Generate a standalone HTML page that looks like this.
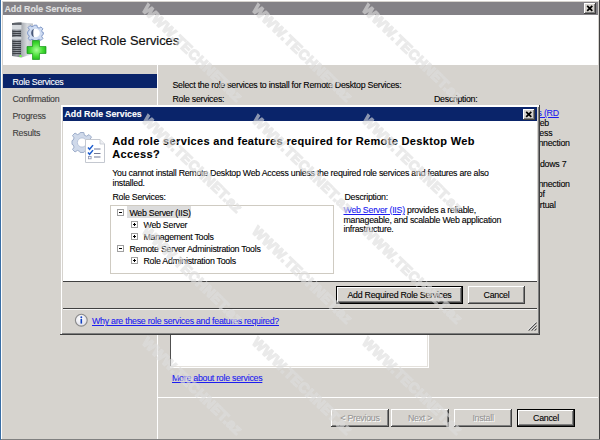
<!DOCTYPE html>
<html><head><meta charset="utf-8">
<style>
*{margin:0;padding:0;box-sizing:border-box}
html,body{width:600px;height:440px;overflow:hidden;background:#d6d3ce;font-family:"Liberation Sans",sans-serif;font-size:8.8px;letter-spacing:-0.25px;color:#000}
.a{position:absolute;white-space:nowrap;line-height:10px;-webkit-text-stroke:0.1px currentColor}
.lnk{color:#1c1cf0;text-decoration:underline}
.pm{position:absolute;width:7px;height:7px;border:1px solid #a0a0a0;background:#fff}
.pm:before{content:"";position:absolute;left:1px;top:2px;width:3px;height:1px;background:#000}
.pl:after{content:"";position:absolute;left:2px;top:1px;width:1px;height:3px;background:#000}
</style></head><body>
<div style="position:absolute;left:0px;top:0px;width:1px;height:440px;background:#3a6ea5;"></div>
<div style="position:absolute;left:1px;top:0px;width:599px;height:440px;background:#fff;"></div>
<div style="position:absolute;left:2px;top:1px;width:598px;height:439px;background:#d6d3ce;"></div>
<div style="position:absolute;left:599px;top:0px;width:1px;height:440px;background:#404040;"></div>
<div style="position:absolute;left:1px;top:439px;width:599px;height:1px;background:#808080;"></div>
<div style="position:absolute;left:3px;top:2px;width:595px;height:13px;background:#838186;"></div>
<div class="a" style="left:4.5px;top:4px;font-weight:bold;color:#e0e0e0;letter-spacing:0">Add Role Services</div>
<div style="position:absolute;left:584px;top:3px;width:12px;height:11px;background:#404040;"></div>
<div style="position:absolute;left:584px;top:3px;width:11px;height:10px;background:#fff;"></div>
<div style="position:absolute;left:585px;top:4px;width:10px;height:9px;background:#808080;"></div>
<div style="position:absolute;left:585px;top:4px;width:9px;height:8px;background:#d6d3ce;"></div>
<svg style="position:absolute;left:584px;top:3px" width="12" height="11"><path d="M3.2 2.8 L8.3 7.9 M8.3 2.8 L3.2 7.9" stroke="#000" stroke-width="1.7"/></svg>
<div style="position:absolute;left:3px;top:15px;width:595px;height:50px;background:#fff;"></div>
<div class="a" style="left:61px;top:34px;font-size:12.8px;line-height:14px;letter-spacing:0;color:#111;-webkit-text-stroke:0.2px #111">Select Role Services</div>
<div style="position:absolute;left:157px;top:65px;width:1px;height:374px;background:#fff;"></div>
<div style="position:absolute;left:3px;top:74px;width:154px;height:14px;background:#0a246a;"></div>
<div class="a" style="left:12.5px;top:77px;color:#fff">Role Services</div>
<div class="a" style="left:12.5px;top:94px;color:#404040">Confirmation</div>
<div class="a" style="left:12.5px;top:111px;color:#404040">Progress</div>
<div class="a" style="left:12.5px;top:128px;color:#404040">Results</div>
<div class="a" style="left:172.5px;top:80px;">Select the role services to install for Remote Desktop Services:</div>
<div class="a" style="left:172.5px;top:94px;">Role services:</div>
<div class="a" style="left:434px;top:94px;">Description:</div>
<div style="position:absolute;left:170px;top:110px;width:259px;height:258px;background:#fff;"></div>
<div style="position:absolute;left:170px;top:110px;width:258px;height:257px;background:#e4e1dc;"></div>
<div style="position:absolute;left:170px;top:110px;width:257px;height:256px;background:#505050;"></div>
<div style="position:absolute;left:171px;top:110px;width:256px;height:256px;background:#fff;"></div>
<div class="a lnk" style="left:172px;top:373px">More about role services</div>
<div style="position:absolute;left:158px;top:397px;width:440px;height:1px;background:#fff;"></div>
<div style="position:absolute;left:539px;top:100px;width:60px;height:120px;overflow:hidden">
<div class="a lnk" style="right:40.2px;top:8px">Access (RD</div>
<div class="a" style="right:50.0px;top:18px">Web</div>
<div class="a" style="right:46.7px;top:28px">Access</div>
<div class="a" style="right:29.3px;top:38px">Connection</div>
<div class="a" style="right:32.7px;top:59px">Windows 7</div>
<div class="a" style="right:29.3px;top:79px">Connection</div>
<div class="a" style="right:54.4px;top:89px">menu of</div>
<div class="a" style="right:43.3px;top:100px">virtual</div>
</div>
<div style="position:absolute;left:331px;top:409px;width:58px;height:18px;background:#404040;"></div>
<div style="position:absolute;left:331px;top:409px;width:57px;height:17px;background:#fff;"></div>
<div style="position:absolute;left:332px;top:410px;width:56px;height:16px;background:#808080;"></div>
<div style="position:absolute;left:332px;top:410px;width:55px;height:15px;background:#d6d3ce;"></div>
<div class="a" style="left:331px;width:58px;text-align:center;top:413px;color:#969696;text-shadow:1px 1px 0 #fff;">&lt; Previous</div>
<div style="position:absolute;left:391px;top:409px;width:58px;height:18px;background:#404040;"></div>
<div style="position:absolute;left:391px;top:409px;width:57px;height:17px;background:#fff;"></div>
<div style="position:absolute;left:392px;top:410px;width:56px;height:16px;background:#808080;"></div>
<div style="position:absolute;left:392px;top:410px;width:55px;height:15px;background:#d6d3ce;"></div>
<div class="a" style="left:391px;width:58px;text-align:center;top:413px;color:#969696;text-shadow:1px 1px 0 #fff;">Next &gt;</div>
<div style="position:absolute;left:454px;top:409px;width:58px;height:18px;background:#404040;"></div>
<div style="position:absolute;left:454px;top:409px;width:57px;height:17px;background:#fff;"></div>
<div style="position:absolute;left:455px;top:410px;width:56px;height:16px;background:#808080;"></div>
<div style="position:absolute;left:455px;top:410px;width:55px;height:15px;background:#d6d3ce;"></div>
<div class="a" style="left:454px;width:58px;text-align:center;top:413px;color:#969696;text-shadow:1px 1px 0 #fff;">Install</div>
<div style="position:absolute;left:517px;top:409px;width:58px;height:18px;background:#000;"></div>
<div style="position:absolute;left:518px;top:410px;width:56px;height:16px;background:#404040;"></div>
<div style="position:absolute;left:518px;top:410px;width:55px;height:15px;background:#fff;"></div>
<div style="position:absolute;left:519px;top:411px;width:54px;height:14px;background:#808080;"></div>
<div style="position:absolute;left:519px;top:411px;width:53px;height:13px;background:#d6d3ce;"></div>
<div class="a" style="left:517px;width:58px;text-align:center;top:413px;">Cancel</div>
<div style="position:absolute;left:60px;top:105px;width:480px;height:230px;background:#404040;"></div>
<div style="position:absolute;left:60px;top:105px;width:479px;height:229px;background:#d6d3ce;"></div>
<div style="position:absolute;left:61px;top:105px;width:478px;height:229px;background:#fff;"></div>
<div style="position:absolute;left:61px;top:106px;width:477px;height:228px;background:#fff;"></div>
<div style="position:absolute;left:62px;top:107px;width:477px;height:227px;background:#808080;"></div>
<div style="position:absolute;left:62px;top:107px;width:476px;height:226px;background:#d6d3ce;"></div>
<div style="position:absolute;left:63px;top:107px;width:474px;height:14px;background:#0a246a;"></div>
<div class="a" style="left:64.5px;top:109px;font-weight:bold;color:#fff;letter-spacing:0">Add Role Services</div>
<div style="position:absolute;left:523px;top:109px;width:12px;height:11px;background:#404040;"></div>
<div style="position:absolute;left:523px;top:109px;width:11px;height:10px;background:#fff;"></div>
<div style="position:absolute;left:524px;top:110px;width:10px;height:9px;background:#808080;"></div>
<div style="position:absolute;left:524px;top:110px;width:9px;height:8px;background:#d6d3ce;"></div>
<svg style="position:absolute;left:523px;top:109px" width="12" height="11"><path d="M3.2 2.8 L8.3 7.9 M8.3 2.8 L3.2 7.9" stroke="#000" stroke-width="1.7"/></svg>
<div style="position:absolute;left:63px;top:121px;width:474px;height:160px;background:#fff;"></div>
<div style="position:absolute;left:63px;top:281px;width:474px;height:1px;background:#404040;"></div>
<div class="a" style="left:112.3px;top:135px;font-weight:bold;font-size:11px;line-height:13px;letter-spacing:0.35px">Add role services and features required for Remote Desktop Web<br>Access?</div>
<div class="a" style="left:112.3px;top:168px;">You cannot install Remote Desktop Web Access unless the required role services and features are also</div>
<div class="a" style="left:112.5px;top:178px;">installed.</div>
<div class="a" style="left:112.5px;top:192px;">Role Services:</div>
<div style="position:absolute;left:110px;top:205px;width:224px;height:69px;background:#cfcbc2;"></div>
<div style="position:absolute;left:111px;top:206px;width:222px;height:67px;background:#fff;"></div>
<div style="position:absolute;left:127px;top:206px;width:64px;height:12px;background:#dcdcdc;"></div>
<div class="pm" style="left:117px;top:209px"></div>
<div class="a" style="left:129.4px;top:208px;">Web Server (IIS)</div>
<div class="pm pl" style="left:131px;top:221px"></div>
<div class="a" style="left:143.5px;top:220px;">Web Server</div>
<div class="pm pl" style="left:131px;top:233px"></div>
<div class="a" style="left:143.5px;top:232px;">Management Tools</div>
<div class="pm" style="left:117px;top:245px"></div>
<div class="a" style="left:129.4px;top:244px;">Remote Server Administration Tools</div>
<div class="pm pl" style="left:131px;top:257px"></div>
<div class="a" style="left:143.5px;top:256px;">Role Administration Tools</div>
<div class="a" style="left:344.5px;top:192px;">Description:</div>
<div class="a" style="left:343.5px;top:205px;"><span class="lnk">Web Server (IIS)</span> provides a reliable,</div>
<div class="a" style="left:343.5px;top:215px;">manageable, and scalable Web application</div>
<div class="a" style="left:343.5px;top:224px;">infrastructure.</div>
<div style="position:absolute;left:336px;top:286px;width:127px;height:18px;background:#000;"></div>
<div style="position:absolute;left:337px;top:287px;width:125px;height:16px;background:#404040;"></div>
<div style="position:absolute;left:337px;top:287px;width:124px;height:15px;background:#fff;"></div>
<div style="position:absolute;left:338px;top:288px;width:123px;height:14px;background:#808080;"></div>
<div style="position:absolute;left:338px;top:288px;width:122px;height:13px;background:#d6d3ce;"></div>
<div class="a" style="left:336px;width:127px;text-align:center;top:290px;">Add Required Role Services</div>
<div style="position:absolute;left:468px;top:286px;width:57px;height:18px;background:#404040;"></div>
<div style="position:absolute;left:468px;top:286px;width:56px;height:17px;background:#fff;"></div>
<div style="position:absolute;left:469px;top:287px;width:55px;height:16px;background:#808080;"></div>
<div style="position:absolute;left:469px;top:287px;width:54px;height:15px;background:#d6d3ce;"></div>
<div class="a" style="left:468px;width:57px;text-align:center;top:290px;">Cancel</div>
<div style="position:absolute;left:63px;top:308px;width:474px;height:1px;background:#404040;"></div>
<div style="position:absolute;left:63px;top:309px;width:474px;height:1px;background:#f4f4f4;"></div>
<svg style="position:absolute;left:74px;top:313px" width="15" height="15"><defs><radialGradient id="ig" cx="0.4" cy="0.35" r="0.7"><stop offset="0" stop-color="#fff"/><stop offset="1" stop-color="#dcdce8"/></radialGradient></defs><circle cx="7.3" cy="7.2" r="5.9" fill="url(#ig)" stroke="#8a8a8a" stroke-width="1.1"/><circle cx="7.3" cy="4.2" r="0.95" fill="#1040c0"/><path d="M7.3 5.9 V10.6" stroke="#1040c0" stroke-width="1.6"/></svg>
<div class="a lnk" style="left:92px;top:316px;">Why are these role services and features required?</div>
<svg style="position:absolute;left:526px;top:320px" width="12" height="12"><path d="M2.5 10.5 L10.5 2.5 M5.5 10.5 L10.5 5.5 M8.5 10.5 L10.5 8.5" stroke="#505050" stroke-width="1.1"/><path d="M1.8 10 L10 1.8 M4.8 10 L10 4.8 M7.8 10 L10 7.8" stroke="#fff" stroke-width="0.8"/></svg>
<svg style="position:absolute;left:8px;top:18px" width="42" height="44">
<defs>
<linearGradient id="sf" x1="0" x2="1"><stop offset="0" stop-color="#6a6f76"/><stop offset="0.5" stop-color="#989da4"/><stop offset="1" stop-color="#767c84"/></linearGradient>
<linearGradient id="ss" x1="0" x2="1"><stop offset="0" stop-color="#a8acb2"/><stop offset="0.5" stop-color="#d8dbdf"/><stop offset="1" stop-color="#c0c3c8"/></linearGradient>
<radialGradient id="gp" cx="0.5" cy="0.5" r="0.6"><stop offset="0" stop-color="#a8ff98"/><stop offset="0.55" stop-color="#44dd33"/><stop offset="1" stop-color="#18a818"/></radialGradient>
</defs>
<path d="M13.5 4.5 L25 5.5 L25 36 L13.5 39.5 Z" fill="url(#ss)"/>
<path d="M4 5 L13.5 4.5 L13.5 39.5 L4 38 Z" fill="url(#sf)"/>
<path d="M4 5.2 Q8.5 4 13.5 4.6 L13.5 6.8 L4 6.8 Z" fill="#5c6168"/>
<rect x="4" y="7" width="9.5" height="4.6" fill="#d6dade"/>
<path d="M4.5 13.5 H13 M4.5 15.5 H13 M4.5 17.5 H13 M4.5 23.5 H13 M4.5 25.5 H13 M4.5 27.5 H13 M4.5 29.5 H13 M4.5 31.5 H13 M4.5 33.5 H13 M4.5 35.5 H13" stroke="#3e4248" stroke-width="1"/>
<rect x="4" y="19" width="9.5" height="2.6" fill="#d0d4d8"/>
<rect x="11.5" y="37" width="2" height="2" fill="#6cff40"/>
<g transform="translate(27.5,15)">
<path d="M-1.4 -7.8 L1.4 -7.8 L1.9 -5.6 L3.6 -4.9 L5.5 -6.1 L7.4 -4.2 L6.2 -2.3 L6.9 -0.6 L7.8 -0.6 L7.8 1.4 L6.9 1.9 L6.2 3.6 L7.4 5.5 L5.5 7.4 L3.6 6.2 L1.9 6.9 L1.4 7.8 L-1.4 7.8 L-1.9 6.9 L-3.6 6.2 L-5.5 7.4 L-7.4 5.5 L-6.2 3.6 L-6.9 1.9 L-7.8 1.4 L-7.8 -1.4 L-6.9 -1.9 L-6.2 -3.6 L-7.4 -5.5 L-5.5 -7.4 L-3.6 -6.2 L-1.9 -6.9 Z" fill="#cfdcf2" stroke="#8098c8" stroke-width="1"/>
<circle cx="0" cy="0" r="4.3" fill="#fff"/>
<path d="M-1 -4.2 A4.3 4.3 0 0 0 -1 4.2 A1.2 4.2 0 0 1 -1 -4.2 Z" fill="#4a5a7a"/>
</g>
<path d="M24.5 22.5 H31.5 V28.5 H38 V35.5 H31.5 V41.5 H24.5 V35.5 H19 V28.5 H24.5 Z" fill="url(#gp)" stroke="#1a9a1a" stroke-width="0.7"/>
</svg>
<svg style="position:absolute;left:68px;top:126px" width="42" height="42">
<g transform="translate(14,16.5)">
<path d="M-1.8 -10 L1.8 -10 L2.4 -7.2 L4.6 -6.3 L7 -7.9 L9.5 -5.4 L7.9 -3 L8.8 -0.8 L10 -0.8 L10 1.8 L8.8 2.4 L7.9 4.6 L9.5 7 L7 9.5 L4.6 7.9 L2.4 8.8 L1.8 10 L-1.8 10 L-2.4 8.8 L-4.6 7.9 L-7 9.5 L-9.5 7 L-7.9 4.6 L-8.8 2.4 L-10 1.8 L-10 -1.8 L-8.8 -2.4 L-7.9 -4.6 L-9.5 -7 L-7 -9.5 L-4.6 -7.9 L-2.4 -8.8 Z" fill="#cfd9ea" stroke="#9eaecb" stroke-width="1"/>
<circle cx="0" cy="0" r="4.6" fill="#fff" stroke="#aebbd4" stroke-width="0.8"/>
</g>
<path d="M17.5 13.5 H32 L36.5 18 V36.5 H17.5 Z" fill="#fff" stroke="#c4c8d0" stroke-width="1"/>
<path d="M32 13.5 V18 H36.5" fill="#eef0f4" stroke="#c4c8d0" stroke-width="0.8"/>
<path d="M20 21.5 l1.6 1.8 l3.4 -4.2" stroke="#1f5fd0" stroke-width="1.5" fill="none"/>
<path d="M20 26.5 l1.6 1.8 l3.4 -4.2" stroke="#1f5fd0" stroke-width="1.5" fill="none"/>
<rect x="20.5" y="30.5" width="2.6" height="2.3" fill="none" stroke="#8890b0" stroke-width="0.8"/>
<path d="M26 23 H32.5 M26 27.5 H32.5 M26 31 H32.5" stroke="#707898" stroke-width="1.1"/>
</svg>

<svg style="position:absolute;left:0;top:0" width="600" height="440"><defs><filter id="bl" x="-5%" y="-5%" width="110%" height="110%"><feGaussianBlur stdDeviation="0.7"/></filter></defs><g filter="url(#bl)">
<text transform="translate(144,6) rotate(44)" x="1" y="5" font-family="Liberation Sans" font-weight="bold" font-size="14" letter-spacing="0.5" fill="#dedede" stroke="#dedede" stroke-width="1.4" opacity="0.62">WWW.TECHNET.az</text>
<text transform="translate(144,117) rotate(44)" x="1" y="5" font-family="Liberation Sans" font-weight="bold" font-size="14" letter-spacing="0.5" fill="#dedede" stroke="#dedede" stroke-width="1.4" opacity="0.62">WWW.TECHNET.az</text>
<text transform="translate(144,228) rotate(44)" x="1" y="5" font-family="Liberation Sans" font-weight="bold" font-size="14" letter-spacing="0.5" fill="#dedede" stroke="#dedede" stroke-width="1.4" opacity="0.62">WWW.TECHNET.az</text>
<text transform="translate(144,339) rotate(44)" x="1" y="5" font-family="Liberation Sans" font-weight="bold" font-size="14" letter-spacing="0.5" fill="#dedede" stroke="#dedede" stroke-width="1.4" opacity="0.62">WWW.TECHNET.az</text>
<text transform="translate(254,6) rotate(44)" x="1" y="5" font-family="Liberation Sans" font-weight="bold" font-size="14" letter-spacing="0.5" fill="#dedede" stroke="#dedede" stroke-width="1.4" opacity="0.62">WWW.TECHNET.az</text>
<text transform="translate(254,117) rotate(44)" x="1" y="5" font-family="Liberation Sans" font-weight="bold" font-size="14" letter-spacing="0.5" fill="#dedede" stroke="#dedede" stroke-width="1.4" opacity="0.62">WWW.TECHNET.az</text>
<text transform="translate(254,228) rotate(44)" x="1" y="5" font-family="Liberation Sans" font-weight="bold" font-size="14" letter-spacing="0.5" fill="#dedede" stroke="#dedede" stroke-width="1.4" opacity="0.62">WWW.TECHNET.az</text>
<text transform="translate(254,339) rotate(44)" x="1" y="5" font-family="Liberation Sans" font-weight="bold" font-size="14" letter-spacing="0.5" fill="#dedede" stroke="#dedede" stroke-width="1.4" opacity="0.62">WWW.TECHNET.az</text>
<text transform="translate(364,6) rotate(44)" x="1" y="5" font-family="Liberation Sans" font-weight="bold" font-size="14" letter-spacing="0.5" fill="#dedede" stroke="#dedede" stroke-width="1.4" opacity="0.62">WWW.TECHNET.az</text>
<text transform="translate(364,117) rotate(44)" x="1" y="5" font-family="Liberation Sans" font-weight="bold" font-size="14" letter-spacing="0.5" fill="#dedede" stroke="#dedede" stroke-width="1.4" opacity="0.62">WWW.TECHNET.az</text>
<text transform="translate(364,228) rotate(44)" x="1" y="5" font-family="Liberation Sans" font-weight="bold" font-size="14" letter-spacing="0.5" fill="#dedede" stroke="#dedede" stroke-width="1.4" opacity="0.62">WWW.TECHNET.az</text>
<text transform="translate(364,339) rotate(44)" x="1" y="5" font-family="Liberation Sans" font-weight="bold" font-size="14" letter-spacing="0.5" fill="#dedede" stroke="#dedede" stroke-width="1.4" opacity="0.62">WWW.TECHNET.az</text>
</g></svg>
</body></html>
